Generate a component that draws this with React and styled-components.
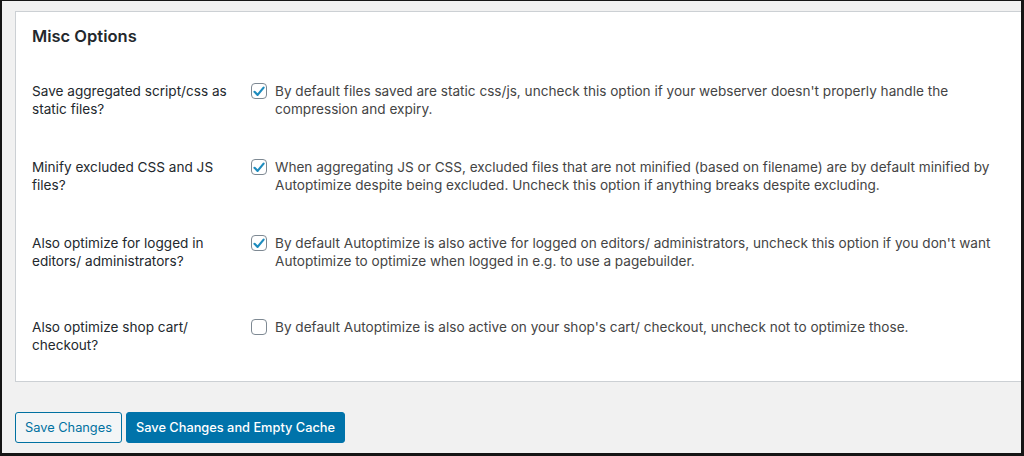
import React from 'react';
import styled, { createGlobalStyle } from 'styled-components';

const GlobalStyle = createGlobalStyle`
  html, body { margin: 0; padding: 0; }
  body {
    font-family: Inter, "Noto Sans", "Liberation Sans", sans-serif;
    font-size: 13.6px;
    color: #444;
    background: #111;
  }
`;

const Frame = styled.div`
  box-sizing: border-box;
  width: 1024px;
  height: 456px;
  border-style: solid;
  border-color: #151515;
  border-width: 1px 3px 3px 2px;
  background: #f1f1f1;
  padding: 10px 0 0 13px;
  overflow: hidden;
`;

const Panel = styled.div`
  box-sizing: border-box;
  height: 371px;
  background: #fff;
  border: 1px solid #ccd0d4;
  border-right: none;
  padding: 13px 0 0 16px;
`;

const Heading = styled.h2`
  margin: 0 0 35px;
  font-size: 16.5px;
  line-height: 22px;
  font-weight: 600;
  color: #23282d;
`;

const Row = styled.div`
  display: grid;
  grid-template-columns: 219px 1fr;
  padding-bottom: 40px;
  padding-top: ${(p) => (p.$extra ? '8px' : '0')};
`;

const Label = styled.div`
  color: #23282d;
  line-height: 18px;
  padding-right: 10px;
`;

const Option = styled.label`
  display: flex;
  align-items: flex-start;
  gap: 8px;
  line-height: 18px;
  color: #444;
  padding-right: 20px;
`;

const Box = styled.span`
  flex: none;
  box-sizing: border-box;
  width: 16px;
  height: 16px;
  margin-top: 1px;
  border: 1px solid #7e8993;
  border-radius: 4px;
  background: #fff;
  display: flex;
  align-items: center;
  justify-content: center;
`;

const Footer = styled.div`
  display: flex;
  gap: 4px;
  margin-top: 30px;
`;

const Button = styled.button`
  box-sizing: border-box;
  height: 31px;
  padding: 0 9px;
  border-radius: 3px;
  font-family: inherit;
  font-size: 12.8px;
  border: 1px solid ${(p) => (p.$primary ? '#0073aa' : '#0071a1')};
  background: ${(p) => (p.$primary ? '#0073aa' : '#f3f5f6')};
  color: ${(p) => (p.$primary ? '#fff' : '#0071a1')};
  font-weight: ${(p) => (p.$primary ? 500 : 400)};
`;

const Check = () => (
  <svg width="12" height="11" viewBox="0 0 12 11">
    <path d="M1.5 5.8 L4.6 8.9 L10.6 1.6" fill="none" stroke="#1e8cbe" strokeWidth="2.2" strokeLinecap="round" strokeLinejoin="round" />
  </svg>
);

const rows = [
  {
    label: 'Save aggregated script/css as static files?',
    text: "By default files saved are static css/js, uncheck this option if your webserver doesn't properly handle the compression and expiry.",
    checked: true,
  },
  {
    label: 'Minify excluded CSS and JS files?',
    text: 'When aggregating JS or CSS, excluded files that are not minified (based on filename) are by default minified by Autoptimize despite being excluded. Uncheck this option if anything breaks despite excluding.',
    checked: true,
  },
  {
    label: 'Also optimize for logged in editors/ administrators?',
    text: "By default Autoptimize is also active for logged on editors/ administrators, uncheck this option if you don't want Autoptimize to optimize when logged in e.g. to use a pagebuilder.",
    checked: true,
  },
  {
    label: 'Also optimize shop cart/ checkout?',
    text: "By default Autoptimize is also active on your shop's cart/ checkout, uncheck not to optimize those.",
    checked: false,
    extra: true,
  },
];

export default function App() {
  return (
    <>
      <GlobalStyle />
      <Frame>
        <Panel>
          <Heading>Misc Options</Heading>
          {rows.map((r) => (
            <Row key={r.label} $extra={r.extra}>
              <Label>{r.label}</Label>
              <Option>
                <Box>{r.checked && <Check />}</Box>
                <span>{r.text}</span>
              </Option>
            </Row>
          ))}
        </Panel>
        <Footer>
          <Button>Save Changes</Button>
          <Button $primary>Save Changes and Empty Cache</Button>
        </Footer>
      </Frame>
    </>
  );
}
